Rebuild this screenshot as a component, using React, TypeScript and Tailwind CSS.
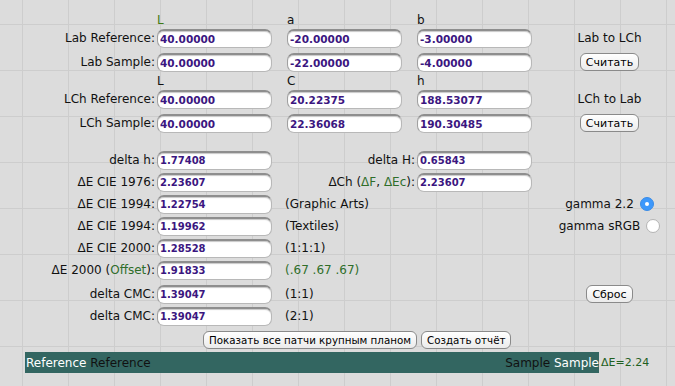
import React from "react";

const FONT = "font-['DejaVu_Sans',sans-serif]";

function Field({ v, small = false }: { v: string; small?: boolean }) {
  return (
    <div
      className={`ml-[2px] w-[115px] h-[19px] shrink-0 rounded-[7px] border border-[#b8b8b8] border-t-[#8e8e8e] border-t-2 border-l-[#a0a0a0] bg-white shadow-[inset_0_1px_1px_rgba(0,0,0,0.22)] flex items-center pl-[2px] pt-[1px] font-bold text-[#3b1680] leading-none ${
        small ? "text-[10px]" : "text-[10.5px]"
      }`}
    >
      {v}
    </div>
  );
}

function Label({ children }: { children: React.ReactNode }) {
  return (
    <div className="w-[155px] shrink-0 text-right text-[12px] leading-none text-[#111]">
      {children}
    </div>
  );
}

function Btn({ children, small = false }: { children: React.ReactNode; small?: boolean }) {
  return (
    <button
      className={`h-[18px] rounded-[6px] border border-[#8a8a8a] bg-gradient-to-b from-white to-[#ebebeb] leading-none text-black whitespace-nowrap ${
        small ? "text-[10.3px] px-[5px]" : "text-[11px] px-[5px]"
      }`}
    >
      {children}
    </button>
  );
}

function Right({ children }: { children?: React.ReactNode }) {
  return (
    <div className="ml-[15px] w-[125px] shrink-0 flex justify-center items-center text-[12px] leading-none text-[#111]">
      {children}
    </div>
  );
}

function Radio({ checked }: { checked: boolean }) {
  return checked ? (
    <span className="ml-[6px] w-[14px] h-[14px] rounded-full bg-[#3d98fb] border border-[#3a8ce6] flex items-center justify-center">
      <span className="w-[4px] h-[4px] rounded-full bg-white" />
    </span>
  ) : (
    <span className="ml-[6px] w-[14px] h-[14px] rounded-full bg-white border border-[#b4b4b4]" />
  );
}

function Mid({ children, right = false }: { children?: React.ReactNode; right?: boolean }) {
  return (
    <div
      className={`w-[143px] shrink-0 text-[12px] leading-none text-[#111] whitespace-nowrap ${
        right ? "text-right" : "pl-[13px]"
      }`}
    >
      {children}
    </div>
  );
}

function Header({ a, b, c, green = false }: { a: string; b: string; c: string; green?: boolean }) {
  return (
    <div className="flex items-center h-[17px] text-[12px] leading-none text-[#111]">
      <div className="w-[155px] shrink-0" />
      <div className={`ml-[2px] w-[115px] shrink-0 ${green ? "text-[#3f7a14]" : ""}`}>{a}</div>
      <div className="ml-[15px] w-[115px] shrink-0">{b}</div>
      <div className="ml-[15px] w-[115px] shrink-0">{c}</div>
    </div>
  );
}

export default function App() {
  const G = "text-[#2f6e2a]";
  return (
    <div
      className={`${FONT} w-[675px] h-[386px] overflow-hidden bg-[#dcdcdc] bg-[linear-gradient(to_right,#cdcdcd_1px,transparent_1px),linear-gradient(to_bottom,#cdcdcd_1px,transparent_1px)] [background-size:46px_46px] [background-position:22px_24px] pt-[11px]`}
    >
      <Header a="L" b="a" c="b" green />
      <div className="flex items-center h-[20px]">
        <Label>Lab Reference:</Label>
        <Field v="40.00000" />
        <div className="ml-[13px]" />
        <Field v="-20.00000" />
        <div className="ml-[13px]" />
        <Field v="-3.00000" />
        <Right>Lab to LCh</Right>
      </div>
      <div className="flex items-center h-[20px] mt-[4px]">
        <Label>Lab Sample:</Label>
        <Field v="40.00000" />
        <div className="ml-[13px]" />
        <Field v="-22.00000" />
        <div className="ml-[13px]" />
        <Field v="-4.00000" />
        <Right>
          <Btn>Считать</Btn>
        </Right>
      </div>
      <Header a="L" b="C" c="h" />
      <div className="flex items-center h-[20px]">
        <Label>LCh Reference:</Label>
        <Field v="40.00000" />
        <div className="ml-[13px]" />
        <Field v="20.22375" />
        <div className="ml-[13px]" />
        <Field v="188.53077" />
        <Right>LCh to Lab</Right>
      </div>
      <div className="flex items-center h-[20px] mt-[4px]">
        <Label>LCh Sample:</Label>
        <Field v="40.00000" />
        <div className="ml-[13px]" />
        <Field v="22.36068" />
        <div className="ml-[13px]" />
        <Field v="190.30485" />
        <Right>
          <Btn>Считать</Btn>
        </Right>
      </div>

      <div className="flex items-center h-[20px] mt-[17px]">
        <Label>delta h:</Label>
        <Field v="1.77408" small />
        <Mid right>delta H:</Mid>
        <Field v="0.65843" small />
        <Right />
      </div>
      <div className="flex items-center h-[20px] mt-[2px]">
        <Label>ΔE CIE 1976:</Label>
        <Field v="2.23607" small />
        <Mid right>
          ΔCh (<span className={G}>ΔF</span>, <span className={G}>ΔEc</span>):
        </Mid>
        <Field v="2.23607" small />
        <Right />
      </div>
      <div className="flex items-center h-[20px] mt-[2px]">
        <Label>ΔE CIE 1994:</Label>
        <Field v="1.22754" small />
        <Mid>(Graphic Arts)</Mid>
        <div className="w-[117px] shrink-0" />
        <Right>
          <span>gamma 2.2</span>
          <Radio checked />
        </Right>
      </div>
      <div className="flex items-center h-[20px] mt-[2px]">
        <Label>ΔE CIE 1994:</Label>
        <Field v="1.19962" small />
        <Mid>(Textiles)</Mid>
        <div className="w-[117px] shrink-0" />
        <Right>
          <span>gamma sRGB</span>
          <Radio checked={false} />
        </Right>
      </div>
      <div className="flex items-center h-[20px] mt-[2px]">
        <Label>ΔE CIE 2000:</Label>
        <Field v="1.28528" small />
        <Mid>(1:1:1)</Mid>
      </div>
      <div className="flex items-center h-[20px] mt-[2px]">
        <Label>
          ΔE 2000 (<span className={G}>Offset</span>):
        </Label>
        <Field v="1.91833" small />
        <Mid>
          <span className={G}>(.67 .67 .67)</span>
        </Mid>
      </div>
      <div className="flex items-center h-[20px] mt-[4px]">
        <Label>delta CMC:</Label>
        <Field v="1.39047" small />
        <Mid>(1:1)</Mid>
        <div className="w-[117px] shrink-0" />
        <Right>
          <Btn>Сброс</Btn>
        </Right>
      </div>
      <div className="flex items-center h-[20px] mt-[2px]">
        <Label>delta CMC:</Label>
        <Field v="1.39047" small />
        <Mid>(2:1)</Mid>
      </div>

      <div className="flex items-center h-[20px] mt-[4px] pl-[203px] gap-[4px]">
        <Btn small>Показать все патчи крупным планом</Btn>
        <Btn small>Создать отчёт</Btn>
      </div>

      <div className="flex items-center mt-[2px] text-[12px] leading-none">
        <div className="ml-[25px] w-[574px] h-[21px] bg-[#336661] flex items-center justify-between pl-[1px]">
          <div>
            <span className="text-white">Reference</span> <span className="text-[#111]">Reference</span>
          </div>
          <div>
            <span className="text-[#111]">Sample</span> <span className="text-white">Sample</span>
          </div>
        </div>
        <span className="ml-[2px] text-[11px] text-[#1f601f]">ΔE=2.24</span>
      </div>
    </div>
  );
}
